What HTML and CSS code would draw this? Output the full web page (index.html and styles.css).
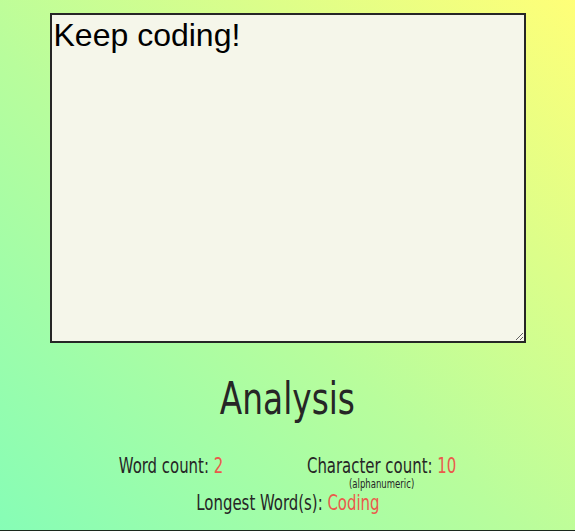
FILE: index.html
```html
<!DOCTYPE html>
<html>
<head>
<meta charset="utf-8">
<link rel="stylesheet" href="styles.css">
</head>
<body>
<main class="page">
  <textarea class="editor">Keep coding!</textarea>
  <h1 class="title">Analysis</h1>
  <div class="stats">
    <div class="stat">Word count: <span class="val">2</span></div>
    <div class="stat stat-char">
      <div>Character count: <span class="val">10</span></div>
      <div class="note">(alphanumeric)</div>
    </div>
  </div>
  <div class="longest">Longest Word(s): <span class="val">Coding</span></div>
</main>
<div class="footer-edge"></div>
</body>
</html>
```
FILE: styles.css
```css
html, body {
  margin: 0;
  height: 100%;
}
body {
  background: linear-gradient(to top right, #86fdb6 0%, #b8fd9c 45%, #ffff78 100%);
  overflow: hidden;
  font-family: "DejaVu Sans Condensed", "Liberation Sans Narrow", "Liberation Sans", sans-serif;
  color: #262626;
  display: flex;
  flex-direction: column;
  height: 531px;
}
.page {
  flex: 1;
  display: flex;
  flex-direction: column;
  align-items: center;
  padding-top: 13px;
}
.editor {
  box-sizing: border-box;
  width: 476px;
  height: 330px;
  margin: 0;
  border: 2px solid #262626;
  background: #f5f6ea;
  font-family: "Liberation Sans", Arial, sans-serif;
  font-size: 32px;
  padding: 2px;
  color: #000;
  resize: both;
  outline: none;
}
.title {
  margin: 27px 0 0;
  font-size: 45px;
  font-weight: 400;
  line-height: 58px;
  transform: scaleX(0.81);
}
.stats {
  display: flex;
  gap: 106px;
  margin-top: 26px;
  font-size: 21px;
  line-height: 24px;
  transform: scaleX(0.79);
}
.stat-char {
  display: flex;
  flex-direction: column;
  align-items: center;
}
.note {
  font-size: 12px;
  line-height: 13px;
}
.val {
  color: #ea5a4b;
}
.longest {
  margin-top: 0;
  font-size: 21px;
  line-height: 24px;
  transform: scaleX(0.79);
}
.footer-edge {
  height: 1px;
  background: #1c2a1e;
}
```
